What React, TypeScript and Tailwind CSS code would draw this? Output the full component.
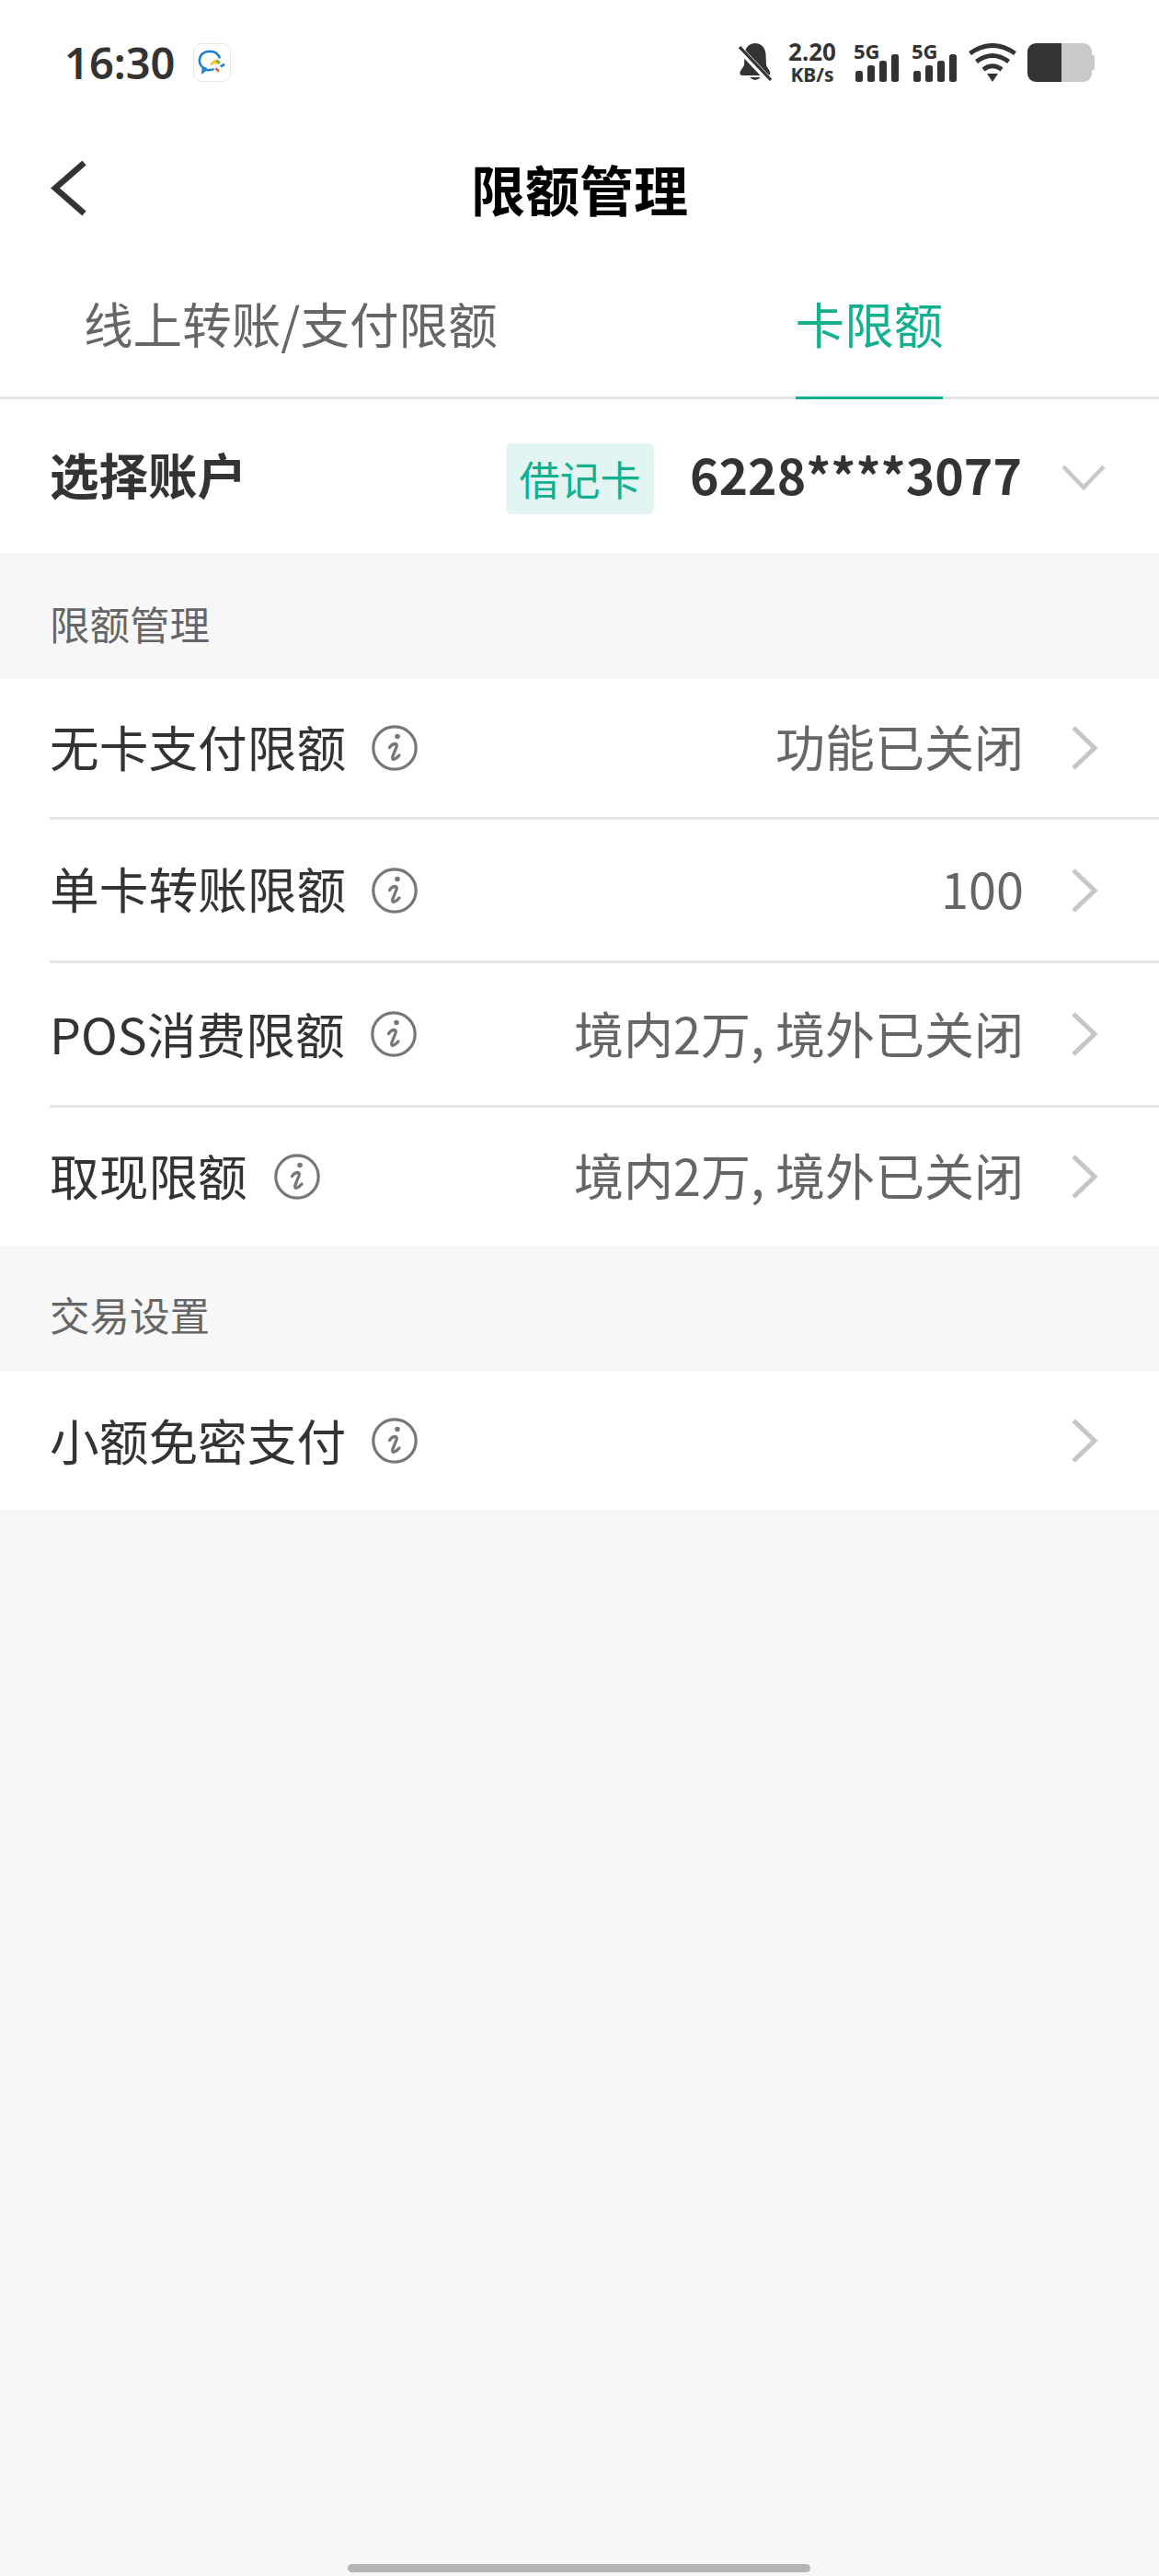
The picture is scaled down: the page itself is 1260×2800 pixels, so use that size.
import React from "react";

const cjk = { fontFamily: '"Noto Sans CJK SC", sans-serif' };

function Bars() {
  return (
    <svg width="48" height="30" viewBox="0 0 48 30" className="block">
      <rect x="0" y="18" width="8" height="12" rx="2.5" fill="#333" />
      <rect x="13" y="12" width="8" height="18" rx="2.5" fill="#333" />
      <rect x="26" y="7" width="8" height="23" rx="2.5" fill="#333" />
      <rect x="39" y="0" width="8" height="30" rx="2.5" fill="#333" />
    </svg>
  );
}

function Signal() {
  return (
    <div className="relative w-[50px] h-[42px]">
      <span className="absolute left-0 top-[-5px] text-[22px] leading-[26px] font-bold text-[#333]" style={{ fontFamily: '"Noto Sans", sans-serif' }}>5G</span>
      <div className="absolute left-[2px] bottom-0"><Bars /></div>
    </div>
  );
}

function Info() {
  return (
    <svg width="50" height="50" viewBox="0 0 50 50" className="block shrink-0" fill="none">
      <circle cx="25" cy="25" r="23.2" stroke="#777" strokeWidth="3.2" />
      <circle cx="28" cy="12.5" r="2.8" fill="#777" />
      <path d="M19.5 24.5 Q22 20.5 26 20.5 Q28 21 27 24 L22.8 34.5 Q22.3 37.8 24.5 37.2 Q27.5 36.2 30 33" stroke="#777" strokeWidth="3.3" strokeLinecap="round" />
    </svg>
  );
}

function Chevron() {
  return (
    <svg width="30" height="50" viewBox="0 0 30 50" className="block shrink-0" fill="none">
      <path d="M3 3 L26 25 L3 47" stroke="#c6c6c6" strokeWidth="5" />
    </svg>
  );
}

function Row({ label, value, height, line, gap = "gap-[28px]", lift = "mt-[-3px]" }: { label: string; value?: string; height: string; line?: boolean; gap?: string; lift?: string }) {
  return (
    <div className={`bg-white pl-[54px] ${height} relative`}>
      <div className={`flex items-center h-full pr-[66px] ${line ? "border-b-[3px] border-[#e4e4e4]" : ""}`}>
        <div className={`flex items-center ${gap}`}>
          <span className={`text-[53.7px] leading-[64px] text-[#333] ${lift}`}>{label}</span>
          <Info />
        </div>
        <span className={`ml-auto text-[54px] leading-[64px] text-[#666] ${lift}`}>{value}</span>
        <div className="ml-[51px]"><Chevron /></div>
      </div>
    </div>
  );
}

export default function App() {
  return (
    <div className="w-[1260px] h-[2800px] bg-[#f7f7f7] relative overflow-hidden" style={cjk}>
      <div className="bg-white">
        {/* status bar */}
        <div className="h-[136px] flex items-start pt-[47px] pl-[70px] pr-[70px]">
          <span className="text-[47px] leading-[42px] font-semibold text-[#333]" style={{ fontFamily: '"Noto Sans", sans-serif' }}>16:30</span>
          <div className="ml-[19px] w-[41px] h-[42px] rounded-[9px] border border-[#e6e6e6] bg-white flex items-center justify-center">
            <svg width="30" height="30" viewBox="0 0 34 34" fill="none">
              <path d="M11 25 Q2 23 2 14 Q3 4 14 3 Q25 3 27 12" stroke="#1a7fd4" strokeWidth="2.8" />
              <path d="M20 25 Q15 27 10 26 L6 29 L6.5 24" stroke="#1a7fd4" strokeWidth="2.6" />
              <path d="M23 14 L27 18" stroke="#5cb531" strokeWidth="3" />
              <path d="M24 19 L21 15 L16 20" stroke="#f2c21b" strokeWidth="2.6" />
              <path d="M22 24 L26 28" stroke="#e2602a" strokeWidth="3" />
              <path d="M28 22 L33 19" stroke="#1a7fd4" strokeWidth="3" />
            </svg>
          </div>
          <div className="ml-auto flex items-start">
            <svg width="36" height="42" viewBox="0 0 36 42" fill="none" className="block mr-[16px]">
              <path d="M18 0 C11 0 7 5 6.5 12 L6 24 L1.5 31 Q1 35 4 35 L32 35 Q35 35 34 31 L30 24 L29.5 12 C29 5 25 0 18 0 Z" fill="#333" />
              <path d="M12 37 Q18 43 24 37 Z" fill="#333" />
              <path d="M0 5 L34 41" stroke="#fff" strokeWidth="7" />
              <path d="M1 4 L35 40" stroke="#333" strokeWidth="3.2" />
            </svg>
            <div className="w-[56px] flex flex-col items-center font-bold text-[#333]" style={{ fontFamily: '"Noto Sans", sans-serif' }}>
              <span className="text-[26px] leading-[20px] mt-[-1px]">2.20</span>
              <span className="text-[21px] leading-[18px] mt-[6px]">KB/s</span>
            </div>
            <div className="ml-[17px]"><Signal /></div>
            <div className="ml-[13px]"><Signal /></div>
            <svg width="52" height="42" viewBox="0 0 52 42" fill="none" className="block ml-[12px]">
              <path d="M1.5 11 Q26 -6 50.5 11" stroke="#333" strokeWidth="5" />
              <path d="M8.5 20 Q26 7 43.5 20" stroke="#333" strokeWidth="5" />
              <path d="M16 28.5 Q26 21 36 28.5" stroke="#333" strokeWidth="5" />
              <path d="M20 33 L32 33 L26 42 Z" fill="#333" />
            </svg>
            <div className="ml-[12px] flex items-center h-[42px]">
              <div className="w-[37px] h-[42px] bg-[#333] rounded-l-[9px]" />
              <div className="w-[33px] h-[42px] bg-[#c9c9c9] rounded-r-[9px]" />
              <div className="w-[3px] h-[16px] bg-[#c9c9c9] rounded-r-[2px]" />
            </div>
          </div>
        </div>

        {/* nav */}
        <div className="h-[142px] relative flex items-center justify-center pb-[5px]">
          <svg width="40" height="60" viewBox="0 0 40 60" fill="none" className="absolute left-[55px] top-[39px]">
            <path d="M36.5 2 L5 29.5 L36.5 57" stroke="#333" strokeWidth="6.5" />
          </svg>
          <span className="text-[59px] leading-[70px] font-bold text-black">限额管理</span>
        </div>

        {/* tabs */}
        <div className="h-[156px] border-b-[3px] border-[#e4e4e4] flex items-start pl-[91px]">
          <span className="text-[53.6px] leading-[64px] mt-[41px] text-[#666] w-[774px] whitespace-nowrap">线上转账/支付限额</span>
          <div className="w-[160px] h-[156px] border-b-[3px] border-[#13b08f] flex justify-center">
            <span className="text-[53.6px] leading-[64px] mt-[41px] text-[#13b08f] whitespace-nowrap">卡限额</span>
          </div>
        </div>

        {/* account */}
        <div className="h-[167px] flex items-center pl-[54px] pr-[58px]">
          <span className="text-[53.5px] leading-[62px] font-bold text-[#333] mt-[-5px]">选择账户</span>
          <div className="ml-auto w-[161px] h-[77px] rounded-[6px] bg-[#e3f5f2] flex items-center justify-center mt-[5px]">
            <span className="text-[44px] leading-[52px] text-[#13b08f]">借记卡</span>
          </div>
          <span className="ml-[39px] text-[53.5px] leading-[66px] font-bold text-[#333] mt-[-6px]">6228****3077</span>
          <svg width="48" height="28" viewBox="0 0 48 28" fill="none" className="block ml-[43px] mt-[2px]">
            <path d="M2 2 L24 25 L46 2" stroke="#c9c9c9" strokeWidth="4.5" />
          </svg>
        </div>
      </div>

      <div className="h-[136px] flex items-center pl-[54px] pt-[18px]">
        <span className="text-[43.5px] leading-[50px] text-[#666]">限额管理</span>
      </div>
      <Row label="无卡支付限额" value="功能已关闭" height="h-[154px]" line />
      <Row label="单卡转账限额" value="100" height="h-[156px]" line lift="mt-[-5px]" />
      <Row label="POS消费限额" value="境内2万, 境外已关闭" height="h-[157px]" line />
      <Row label="取现限额" value="境内2万, 境外已关闭" height="h-[150px]" gap="gap-[29px]" lift="mt-[-4px]" />

      <div className="h-[137px] flex items-center pl-[54px] pt-[13px]">
        <span className="text-[43.5px] leading-[50px] text-[#666]">交易设置</span>
      </div>
      <Row label="小额免密支付" height="h-[150px]" />

      <div className="absolute left-[378px] top-[2787px] w-[503px] h-[9px] rounded-full bg-[#b5b5b5]" />
    </div>
  );
}
